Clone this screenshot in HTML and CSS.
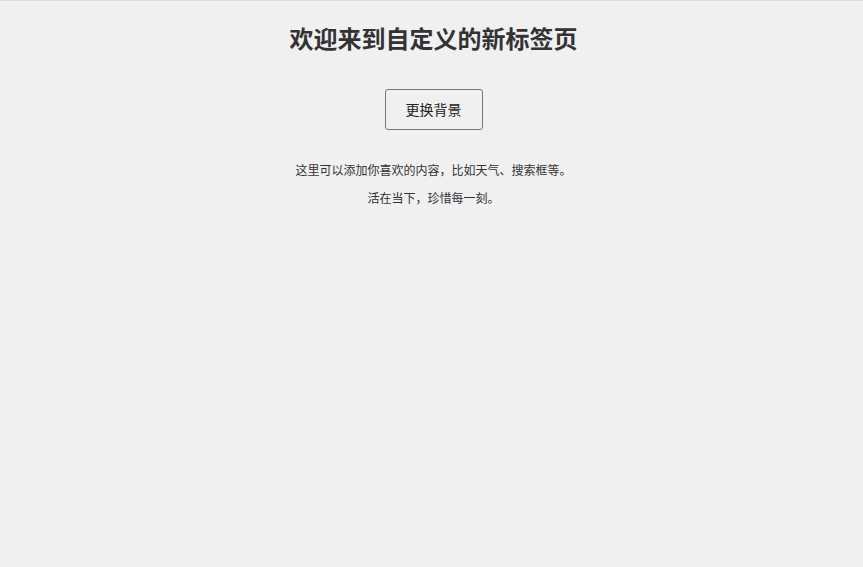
FILE: index.html
```html
<!DOCTYPE html>
<html lang="zh-CN">
<head>
<meta charset="utf-8">
<title>新标签页</title>
<link rel="stylesheet" href="styles.css">
</head>
<body>
<main class="page">
  <h1 class="title">欢迎来到自定义的新标签页</h1>
  <button class="bg-btn" type="button">更换背景</button>
  <p class="note">这里可以添加你喜欢的内容，比如天气、搜索框等。</p>
  <p class="note">活在当下，珍惜每一刻。</p>
</main>
</body>
</html>
```
FILE: styles.css
```css
html, body {
  margin: 0;
  padding: 0;
  height: 100%;
}
body {
  background: #f0f0f0;
  border-top: 1px solid #dcdcdc;
  box-sizing: border-box;
  font-family: "Noto Sans CJK SC", "Noto Sans", sans-serif;
  color: #333;
}
.page {
  display: flex;
  flex-direction: column;
  align-items: center;
  padding-top: 22px;
  padding-left: 4px;
}
.title {
  margin: 0;
  font-size: 24px;
  line-height: 29px;
  font-weight: 700;
  color: #333;
}
.bg-btn {
  margin-top: 37px;
  font-family: inherit;
  font-size: 14px;
  line-height: 19px;
  padding: 10px 20px;
  border: 1px solid #777;
  border-radius: 3px;
  background: #f0f0f0;
  color: #222;
}
.note {
  margin: 12px 0 0;
  font-size: 12px;
  line-height: 16px;
  color: #333;
}
.bg-btn + .note {
  margin-top: 32px;
}
```
